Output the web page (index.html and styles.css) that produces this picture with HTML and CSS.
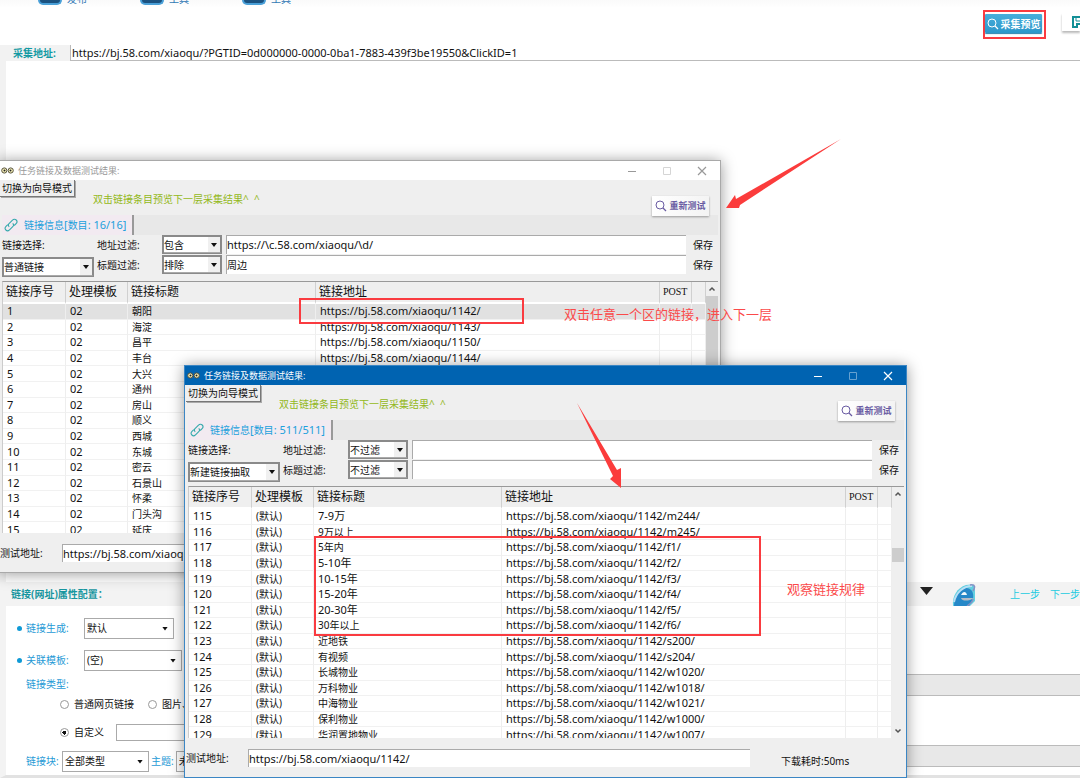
FILE: index.html
```html
<!DOCTYPE html>
<html lang="zh-CN">
<head>
<meta charset="utf-8">
<title>采集预览</title>
<link rel="stylesheet" href="styles.css">
</head>
<body>
<svg class="defs" aria-hidden="true">
  <symbol id="lens" viewBox="0 0 12 12"><circle cx="5" cy="5" r="4" fill="none" stroke="currentColor"/><path d="M8 8l3 3" stroke="currentColor" stroke-width="1.3"/></symbol>
  <symbol id="link" viewBox="0 0 14 14"><g fill="none" stroke="#35a9ac" stroke-width="1.1"><path d="M5.2 8.8C4 7.6 4.200 6.500 5 5.700L8.500 2.200C9.600 1 11.200 1 12.200 2C13.200 3 13.200 4.500 12.100 5.600L10.200 7.500"/><path d="M8.700 5.300C9.900 6.500 9.800 7.500 9 8.300L5.500 11.800C4.400 12.900 2.900 13 1.900 12C.9 11 .9 9.500 2 8.400L3.800 6.600"/></g></symbol>
  <symbol id="eyes" viewBox="0 0 13 7"><g fill="#f8f2b8" stroke="#55513d"><circle cx="3.300" cy="3.500" r="2.600"/><circle cx="9.700" cy="3.500" r="2.600"/></g><circle cx="3.500" cy="3.500" r="1" fill="#222"/><circle cx="9.500" cy="3.500" r="1" fill="#222"/></symbol>
  <symbol id="min" viewBox="0 0 10 10"><path d="M1 5.500h8" stroke="currentColor"/></symbol>
  <symbol id="max" viewBox="0 0 10 10"><path d="M1.500 1.500h7v7h-7z" fill="none" stroke="currentColor"/></symbol>
  <symbol id="close" viewBox="0 0 10 10"><path d="M1 1l8 8M9 1l-8 8" stroke="currentColor" stroke-width="1.2"/></symbol>
  <symbol id="up" viewBox="0 0 8 8"><path d="M1.500 5.500L4 3l2.500 2.500" fill="none" stroke="#555" stroke-width="1.500"/></symbol>
  <symbol id="down" viewBox="0 0 8 8"><path d="M1.500 2.500L4 5l2.500-2.500" fill="none" stroke="#555" stroke-width="1.500"/></symbol>
</svg>

<div class="app">
  <nav class="tabs">
    <a href="#publish"><i></i>发布</a>
    <a href="#tools"><i></i>工具</a>
    <a href="#more"><i></i>工具</a>
  </nav>
  <div class="toolbar">
    <div class="marked"><button class="preview" type="button"><svg><use href="#lens"/></svg>采集预览</button></div>
    <button class="save" type="button" aria-label="保存"><svg viewBox="0 0 14 12"><path d="M1 1h10l2 2v8H1z" fill="#fff" stroke="#128f96" stroke-width="2"/><path d="M4 1v4h7V1" fill="none" stroke="#128f96"/><path d="M4 7h7v5H4z" fill="#128f96"/><path d="M6 9h2v3H6z" fill="#fff"/></svg></button>
  </div>
  <div class="address">
    <label for="url">采集地址:</label>
    <input id="url" type="text" value="https://bj.58.com/xiaoqu/?PGTID=0d000000-0000-0ba1-7883-439f3be19550&amp;ClickID=1">
  </div>
  <main class="editor"></main>
  <div class="section">
    <h2>链接(网址)属性配置：</h2>
    <span class="caret"></span>
    <svg class="browser" viewBox="0 0 24 22"><path d="M1 22C0 12 5 4 14 1c5-1 9-1 9 3v13l-5 5z" fill="#62cfe0"/><path d="M2 22C2 12 7 5 14 4c6 0 8 5 7 11l-4 7z" fill="#2688c8"/><path d="M9 11c2-4 5-4 6 0z" fill="#f2fafc"/><path d="M9 14h13l-4 2c-4 1-8 1-9-2z" fill="#b5bcc6"/><path d="M2 18C4 9 11 2 20 2" fill="none" stroke="#b9dff5" stroke-width="2"/><path d="M18 1c6-1 5 3 3 6M21 15c0 3-3 5-6 7" fill="none" stroke="#8790c3" stroke-width="1.500"/></svg>
    <a href="#prev">上一步</a>
    <a href="#next">下一步</a>
  </div>
  <div class="lower">
    <form class="props">
      <div class="line"><label class="dot" for="gen">链接生成:</label><span class="pick w90"><select id="gen"><option>默认</option></select></span></div>
      <div class="line"><label class="dot" for="tpl">关联模板:</label><span class="pick w98"><select id="tpl"><option>(空)</option></select></span></div>
      <div class="line type">链接类型:</div>
      <div class="line radios"><label><input type="radio" name="t">普通网页链接</label><label><input type="radio" name="t">图片、</label></div>
      <div class="line radios custom"><label><input type="radio" name="t" checked>自定义</label><input class="free" type="text" aria-label="自定义类型"></div>
      <div class="line block"><label for="blk">链接块:</label><span class="pick w86"><select id="blk"><option>全部类型</option></select></span><label for="thm">主题:</label><span class="pick w86"><select id="thm"><option>未</option></select></span></div>
    </form>
    <div class="bars"><div class="bar"></div><div class="bar"></div></div>
  </div>
</div>

<section class="window back">
  <header class="title"><svg class="eyes"><use href="#eyes"/></svg><span>任务链接及数据测试结果:</span>
    <button type="button" aria-label="最小化"><svg><use href="#min"/></svg></button><button class="off" type="button" aria-label="最大化"><svg><use href="#max"/></svg></button><button type="button" aria-label="关闭"><svg><use href="#close"/></svg></button></header>
  <div class="top"><button class="mode" type="button">切换为向导模式</button><p>双击链接条目预览下一层采集结果^&nbsp; ^</p><button class="retest" type="button"><svg><use href="#lens"/></svg>重新测试</button></div>
  <div class="strip"><div class="tab"><svg><use href="#link"/></svg><span>链接信息<b>[</b>数目<b>: 16/16]</b></span></div></div>
  <div class="filters">
    <div class="kind"><label for="k1">链接选择:</label><span class="pick raised"><select id="k1"><option>普通链接</option></select></span></div>
    <div class="rules">
      <label for="a1">地址过滤:</label><span class="pick raised"><select id="a1"><option>包含</option></select></span><input type="text" aria-label="地址过滤值" value="https://\c.58.com/xiaoqu/\d/"><button type="button">保存</button>
      <label for="b1">标题过滤:</label><span class="pick raised"><select id="b1"><option>排除</option></select></span><input class="cn" type="text" aria-label="标题过滤值" value="周边"><button type="button">保存</button>
    </div>
  </div>
  <div class="list">
    <div class="view"><table>
      <colgroup><col class="c1"><col class="c2"><col class="c3"><col><col class="c5"><col class="c6"></colgroup>
      <thead><tr><th>链接序号</th><th>处理模板</th><th>链接标题</th><th>链接地址</th><th class="post">POST</th><th></th></tr></thead>
      <tbody>
        <tr class="sel"><td>1</td><td>02</td><td class="cn">朝阳</td><td>https://bj.58.com/xiaoqu/1142/</td><td></td><td></td></tr>
        <tr><td>2</td><td>02</td><td class="cn">海淀</td><td>https://bj.58.com/xiaoqu/1143/</td><td></td><td></td></tr>
        <tr><td>3</td><td>02</td><td class="cn">昌平</td><td>https://bj.58.com/xiaoqu/1150/</td><td></td><td></td></tr>
        <tr><td>4</td><td>02</td><td class="cn">丰台</td><td>https://bj.58.com/xiaoqu/1144/</td><td></td><td></td></tr>
        <tr><td>5</td><td>02</td><td class="cn">大兴</td><td></td><td></td><td></td></tr>
        <tr><td>6</td><td>02</td><td class="cn">通州</td><td></td><td></td><td></td></tr>
        <tr><td>7</td><td>02</td><td class="cn">房山</td><td></td><td></td><td></td></tr>
        <tr><td>8</td><td>02</td><td class="cn">顺义</td><td></td><td></td><td></td></tr>
        <tr><td>9</td><td>02</td><td class="cn">西城</td><td></td><td></td><td></td></tr>
        <tr><td>10</td><td>02</td><td class="cn">东城</td><td></td><td></td><td></td></tr>
        <tr><td>11</td><td>02</td><td class="cn">密云</td><td></td><td></td><td></td></tr>
        <tr><td>12</td><td>02</td><td class="cn">石景山</td><td></td><td></td><td></td></tr>
        <tr><td>13</td><td>02</td><td class="cn">怀柔</td><td></td><td></td><td></td></tr>
        <tr><td>14</td><td>02</td><td class="cn">门头沟</td><td></td><td></td><td></td></tr>
        <tr><td>15</td><td>02</td><td class="cn">延庆</td><td></td><td></td><td></td></tr>
      </tbody>
    </table></div>
    <div class="scroll"><svg><use href="#up"/></svg><i class="thumb long"></i><svg><use href="#down"/></svg></div>
  </div>
  <footer><label for="t1">测试地址:</label><input id="t1" type="text" value="https://bj.58.com/xiaoqu/"><span></span></footer>
</section>

<section class="window front">
  <header class="title"><svg class="eyes"><use href="#eyes"/></svg><span>任务链接及数据测试结果:</span>
    <button type="button" aria-label="最小化"><svg><use href="#min"/></svg></button><button class="off" type="button" aria-label="最大化"><svg><use href="#max"/></svg></button><button type="button" aria-label="关闭"><svg><use href="#close"/></svg></button></header>
  <div class="top"><button class="mode" type="button">切换为向导模式</button><p>双击链接条目预览下一层采集结果^&nbsp; ^</p><button class="retest" type="button"><svg><use href="#lens"/></svg>重新测试</button></div>
  <div class="strip"><div class="tab"><svg><use href="#link"/></svg><span>链接信息<b>[</b>数目<b>: 511/511]</b></span></div></div>
  <div class="filters">
    <div class="kind"><label for="k2">链接选择:</label><span class="pick raised"><select id="k2"><option>新建链接抽取</option></select></span></div>
    <div class="rules">
      <label for="a2">地址过滤:</label><span class="pick raised"><select id="a2"><option>不过滤</option></select></span><input type="text" aria-label="地址过滤值"><button type="button">保存</button>
      <label for="b2">标题过滤:</label><span class="pick raised"><select id="b2"><option>不过滤</option></select></span><input type="text" aria-label="标题过滤值"><button type="button">保存</button>
    </div>
  </div>
  <div class="list">
    <div class="view"><table>
      <colgroup><col class="c1"><col class="c2"><col class="c3"><col><col class="c5"><col class="c6"></colgroup>
      <thead><tr><th>链接序号</th><th>处理模板</th><th>链接标题</th><th>链接地址</th><th class="post">POST</th><th></th></tr></thead>
      <tbody>
        <tr><td>115</td><td class="cn">(默认)</td><td>7-9万</td><td>https://bj.58.com/xiaoqu/1142/m244/</td><td></td><td></td></tr>
        <tr><td>116</td><td class="cn">(默认)</td><td class="cn">9万以上</td><td>https://bj.58.com/xiaoqu/1142/m245/</td><td></td><td></td></tr>
        <tr><td>117</td><td class="cn">(默认)</td><td class="cn">5年内</td><td>https://bj.58.com/xiaoqu/1142/f1/</td><td></td><td></td></tr>
        <tr><td>118</td><td class="cn">(默认)</td><td>5-10年</td><td>https://bj.58.com/xiaoqu/1142/f2/</td><td></td><td></td></tr>
        <tr><td>119</td><td class="cn">(默认)</td><td>10-15年</td><td>https://bj.58.com/xiaoqu/1142/f3/</td><td></td><td></td></tr>
        <tr><td>120</td><td class="cn">(默认)</td><td>15-20年</td><td>https://bj.58.com/xiaoqu/1142/f4/</td><td></td><td></td></tr>
        <tr><td>121</td><td class="cn">(默认)</td><td>20-30年</td><td>https://bj.58.com/xiaoqu/1142/f5/</td><td></td><td></td></tr>
        <tr><td>122</td><td class="cn">(默认)</td><td class="cn">30年以上</td><td>https://bj.58.com/xiaoqu/1142/f6/</td><td></td><td></td></tr>
        <tr><td>123</td><td class="cn">(默认)</td><td class="cn">近地铁</td><td>https://bj.58.com/xiaoqu/1142/s200/</td><td></td><td></td></tr>
        <tr><td>124</td><td class="cn">(默认)</td><td class="cn">有视频</td><td>https://bj.58.com/xiaoqu/1142/s204/</td><td></td><td></td></tr>
        <tr><td>125</td><td class="cn">(默认)</td><td class="cn">长城物业</td><td>https://bj.58.com/xiaoqu/1142/w1020/</td><td></td><td></td></tr>
        <tr><td>126</td><td class="cn">(默认)</td><td class="cn">万科物业</td><td>https://bj.58.com/xiaoqu/1142/w1018/</td><td></td><td></td></tr>
        <tr><td>127</td><td class="cn">(默认)</td><td class="cn">中海物业</td><td>https://bj.58.com/xiaoqu/1142/w1021/</td><td></td><td></td></tr>
        <tr><td>128</td><td class="cn">(默认)</td><td class="cn">保利物业</td><td>https://bj.58.com/xiaoqu/1142/w1000/</td><td></td><td></td></tr>
        <tr><td>129</td><td class="cn">(默认)</td><td class="cn">华润置地物业</td><td>https://bj.58.com/xiaoqu/1142/w1007/</td><td></td><td></td></tr>
      </tbody>
    </table></div>
    <div class="scroll"><svg><use href="#up"/></svg><i class="thumb short"></i><svg><use href="#down"/></svg></div>
  </div>
  <footer><label for="t2">测试地址:</label><input id="t2" type="text" value="https://bj.58.com/xiaoqu/1142/"><span>下载耗时:50ms</span></footer>
</section>

<svg class="arrow a" viewBox="0 0 116 72"><path d="M115 1L14 67l-1 3L0 70l9-13 1 4z" fill="#fb3c3c"/></svg>
<svg class="arrow b" viewBox="0 0 50 86"><path d="M1 0L41 67l4-2 0 20L34 76l3-3z" fill="#fb3c3c"/></svg>
<div class="box one"></div>
<div class="box two"></div>
<p class="note n1">双击任意一个区的链接，进入下一层</p>
<p class="note n2">观察链接规律</p>
</body>
</html>
```
FILE: styles.css
```css
* { box-sizing: border-box; }
html, body { height: 100%; }
body {
  margin: 0;
  position: relative;
  overflow: hidden;
  background: #fff;
  color: #111;
  font: 10px/16px "Noto Sans", "Noto Sans CJK SC", sans-serif;
}
button, input, select { font: inherit; color: inherit; margin: 0; padding: 0; border: 0; background: none; border-radius: 0; }
p, h2 { margin: 0; font-size: inherit; }
a { text-decoration: none; }
b { font-weight: normal; font-size: 11px; }
.defs { position: absolute; width: 0; height: 0; }

.app { min-height: 100%; display: flex; flex-direction: column; }
.tabs { height: 8px; padding: 0 0 3px 38px; display: flex; align-items: flex-end; gap: 53px; overflow: hidden; background: linear-gradient(#fafafa, #fff); }
.tabs a { display: flex; align-items: flex-end; gap: 5px; color: #3179b5; line-height: 12px; }
.tabs i { width: 24px; height: 16px; border-radius: 5px; background: #1b5280; border: 2px solid #4aa0d8; border-top: 0; }
.toolbar { height: 37px; display: flex; justify-content: flex-end; align-items: flex-start; gap: 16px; }
.marked { margin-top: 2px; width: 63px; height: 29px; border: 2px solid #fa3b40; padding: 2px 2px 0 0; }
.preview { display: flex; align-items: center; justify-content: center; gap: 2px; width: 100%; height: 19px; background: linear-gradient(#47aedb, #2d97c9); color: #fff; border-radius: 1px; font-weight: bold; white-space: nowrap; box-shadow: 0 1px 1px #2a83ad; }
.preview svg, .retest svg { width: 12px; height: 12px; flex: none; }
.save { width: 18px; height: 18px; margin-top: 5px; padding-left: 10px; overflow: hidden; box-shadow: 0 2px 2px #bbb; background: #fff; text-align: left; }
.save svg { width: 14px; height: 12px; display: block; }
.address { height: 16px; display: flex; border-left: 6px solid #f2f2f2; }
.address label { width: 64px; padding-left: 7px; background: #f2f2f2; color: #129aa3; font-weight: bold; }
.address input { flex: 1; padding-left: 1px; border-left: 1px solid #bbb; border-bottom: 1px solid #bbb; font-size: 11px; }
.editor { flex: 1; border-left: 6px solid #f2f2f2; }
.section { height: 24px; display: flex; align-items: center; padding-left: 11px; background: #f3f3f3; color: #17969f; }
.section h2 { flex: 1; font-size: 10px; }
.caret { width: 13px; height: 8px; margin-right: 19px; background: #222; clip-path: polygon(0 0, 100% 0, 50% 100%); margin-bottom: 6px; }
.browser { width: 24px; height: 22px; margin-right: 34px; align-self: flex-end; }
.section a { color: #22cbe0; margin-right: 10px; }
.section a:last-child { margin-right: 0; }
.lower { height: 172px; display: flex; border-left: 6px solid #f3f3f3; border-bottom: 3px solid #e2e2e2; }
.props { width: 260px; display: flex; flex-direction: column; padding-top: 6px; white-space: nowrap; color: #1f9ad6; }
.line { height: 32px; display: flex; align-items: center; padding-left: 20px; }
.dot { width: 58px; position: relative; }
.dot::before { content: ""; position: absolute; left: -9px; top: 6px; width: 5px; height: 5px; border-radius: 50%; background: #0f9ad6; }
.type { height: 16px; }
.radios { height: 24px; padding-left: 54px; gap: 14px; color: #111; }
.radios label { display: flex; align-items: center; gap: 5px; }
.radios input[type=radio] { appearance: none; width: 9px; height: 9px; border: 1px solid #999; border-radius: 50%; background: #fff; }
.radios input[type=radio]:checked { background: radial-gradient(circle, #111 2px, #fff 2px); }
.custom { height: 32px; gap: 12px; }
.free { width: 120px; height: 17px; border: 1px solid #aaa; }
.block { height: 26px; gap: 2px; }
.block label:first-child { width: 34px; }
.bars { flex: 1; padding-top: 68px; display: flex; flex-direction: column; gap: 49px; }
.bar { height: 22px; background: #e8e8e8; border: solid #bbb; border-width: 1px 0; }

.pick { position: relative; display: block; height: 21px; border: 1px solid #aaa; background: #fff; color: #111; }
.pick select { appearance: none; display: block; width: 100%; height: 100%; padding: 0 14px 0 2px; }
.pick::after { content: ""; position: absolute; right: 5px; top: 8px; width: 6px; height: 4px; background: #111; clip-path: polygon(0 0, 100% 0, 50% 100%); pointer-events: none; }
.w90 { width: 90px; }
.w98 { width: 98px; }
.w86 { width: 87px; }
.raised { border: solid #8a8a8a; border-width: 2px 1px 1px 2px; height: 19px; }
.raised select { padding-left: 0; background: linear-gradient(#f0f0f0, #f0f0f0) right / 12px 100% no-repeat; border-right: 1px solid #888; border-bottom: 1px solid #aaa; line-height: 14px; }
.raised::after { right: 4px; top: 6px; }

.window { position: absolute; width: 723px; height: 413px; display: flex; flex-direction: column; background: #efefef; border: 1px solid #a9a9a9; padding: 0 2px 0 1px; box-shadow: 0 1px 14px rgba(0, 0, 0, .4); }
.back { left: -2px; top: 160px; }
.front { left: 184px; top: 365px; border-color: #3b86c4; }
.title { height: 19px; flex: none; margin: 0 -2px 0 -1px; padding: 0 13px 0 2px; display: flex; align-items: center; background: #fff; color: #999; font-size: 9px; }
.title span { flex: 1; padding-left: 4px; }
.title .eyes { width: 13px; height: 7px; }
.title button { width: 10px; height: 10px; margin-left: 25px; }
.title button svg { width: 10px; height: 10px; display: block; }
.title .off { opacity: .4; }
.front .title { background: #0063b1; color: #fff; }
.top { height: 35px; flex: none; display: flex; align-items: flex-start; padding-right: 9px; }
.mode { height: 17px; width: 75px; background: #efefef; border: solid #777; border-width: 0 1px 1px 0; box-shadow: 1px 1px 0 #aaa; white-space: nowrap; }
.top p { flex: 1; margin: 11px 0 0 18px; color: #93b820; }
.retest { position: relative; display: flex; align-items: center; justify-content: center; gap: 2px; width: 57px; height: 20px; margin-top: 16px; background: linear-gradient(100deg, #fff, #f3f3f3); color: #695ba2; font-size: 9px; font-weight: bold; box-shadow: 0 1px 2px #999; white-space: nowrap; }
.strip { height: 20px; flex: none; margin-left: 2px; background: #e8e8e8; }
.tab { height: 20px; width: max-content; padding: 0 6px 0 2px; display: flex; align-items: center; gap: 6px; background: #f2eaf1; border-right: 2px solid #999; color: #22a0dc; }
.tab svg { width: 14px; height: 14px; }
.filters { height: 46px; flex: none; display: flex; gap: 3px; }
.kind { width: 94px; padding-left: 2px; }
.kind label { display: block; height: 22px; line-height: 20px; }
.kind .pick { height: 20px; }
.rules { flex: 1; display: grid; grid-template-columns: 65px 60px 1fr 32px; grid-template-rows: 20px 20px; line-height: 18px; align-items: start; }
.rules label { line-height: 20px; }
.rules input { height: 19px; margin-left: 4px; padding-left: 0; padding-bottom: 2px; background: #fff; border: solid #aaa; border-width: 1px 0 0 1px; font-size: 11px; }
.rules input.cn { font-size: 10px; }
.rules button { justify-self: start; margin-left: 7px; line-height: 20px; }
.list { flex: 1; min-height: 0; display: flex; margin-left: 2px; border-top: 1px solid #999; border-left: 1px solid #ccc; }
.view { flex: 1; overflow: hidden; background: #fff; }
table { width: 100%; height: 256px; table-layout: fixed; border-collapse: separate; border-spacing: 0; font-size: 11px; line-height: 14px; }
.c1 { width: 63px; }
.c2 { width: 62px; }
.c3 { width: 188px; }
.c5 { width: 32px; }
.c6 { width: 14px; }
th { height: 22px; padding: 0 2px 0 3px; font-size: 12px; font-weight: normal; text-align: left; background: #efefef; border-right: 1px solid #d0d0d0; border-bottom: 2px solid #fff; white-space: nowrap; }
th.post { font-family: "Liberation Serif", serif; font-size: 10px; }
td { padding: 0 0 0 4px; border-right: 1px solid #eee; border-bottom: 1px solid #f1f1f1; white-space: nowrap; }
td.cn { font-size: 10px; }
.sel td { background: #e1e1e1; }
.scroll { width: 12px; display: flex; flex-direction: column; align-items: center; justify-content: space-between; padding: 3px 0; }
.scroll svg { width: 8px; height: 8px; flex: none; }
.thumb { width: 12px; background: #cdcdcd; }
.long { flex: 1; margin-top: 3px; }
.short { height: 14px; margin-bottom: 115px; }
footer { height: 39px; flex: none; display: flex; align-items: center; }
footer label { width: 62px; }
footer input { width: 502px; height: 18px; padding-left: 0; background: #fff; border: solid #aaa; border-width: 1px 0 0 1px; font-size: 11px; }
footer span { padding: 6px 0 0 31px; }

.arrow, .box, .note { position: absolute; }
.a { left: 726px; top: 138px; width: 116px; height: 72px; }
.b { left: 576px; top: 403px; width: 50px; height: 86px; }
.box { border: 2px solid #fa3b40; }
.one { left: 299px; top: 298px; width: 225px; height: 26px; }
.two { left: 314px; top: 536px; width: 447px; height: 100px; }
.note { color: #fb4a4a; font-size: 13px; white-space: nowrap; }
.n1 { left: 564px; top: 306px; }
.n2 { left: 787px; top: 581px; }
```
